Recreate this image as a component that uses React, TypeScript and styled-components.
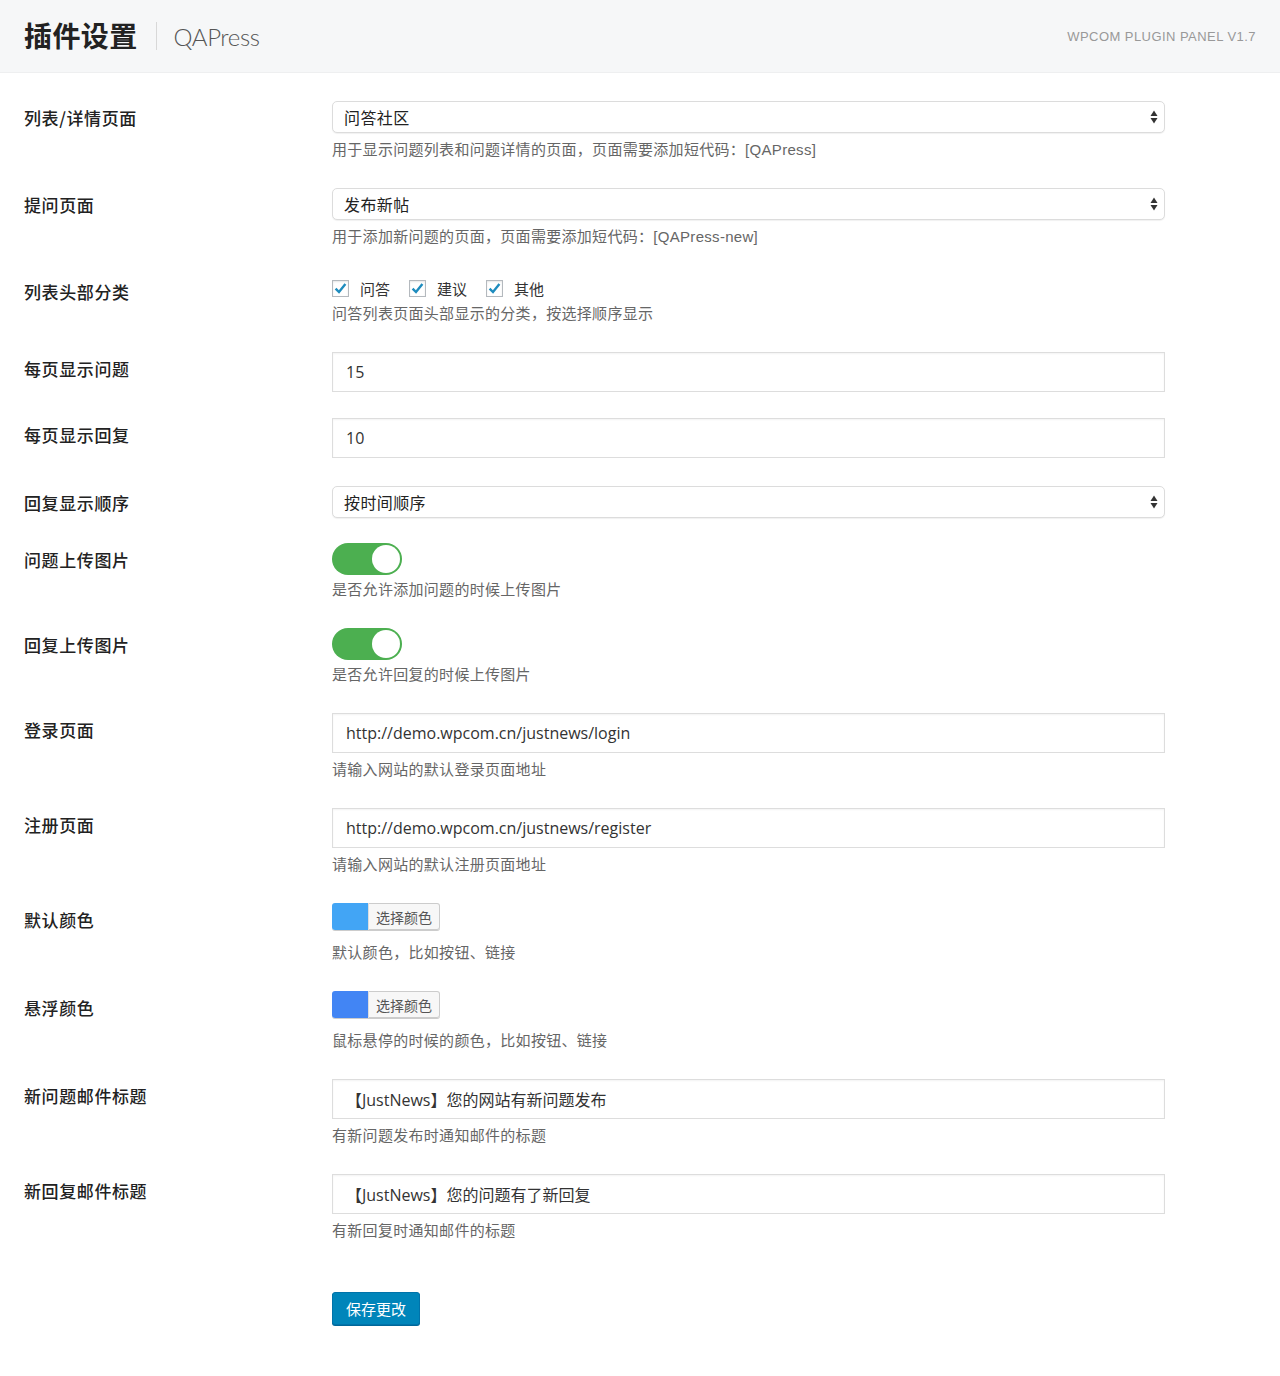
import React from "react";
import styled, { createGlobalStyle } from "styled-components";

const GlobalStyle = createGlobalStyle`
  html, body {
    margin: 0;
    padding: 0;
    background: #fff;
  }
  body {
    font-family: "Liberation Sans", "Noto Sans CJK SC", sans-serif;
    color: #333;
  }
`;

const Page = styled.div`
  width: 1280px;
  min-height: 1376px;
  background: #fff;
`;

const Header = styled.header`
  display: flex;
  align-items: center;
  justify-content: space-between;
  height: 73px;
  padding: 0 24px;
  box-sizing: border-box;
  background: #f6f7f8;
  border-bottom: 1px solid #eeeff0;
`;

const TitleGroup = styled.div`
  display: flex;
  align-items: center;
`;

const Title = styled.h1`
  margin: 0;
  font-size: 28px;
  font-weight: 700;
  color: #222;
  letter-spacing: 0.4px;
  font-family: "Noto Sans CJK SC", sans-serif;
  line-height: 1;
  padding-bottom: 2px;
`;

const Divider = styled.span`
  width: 1px;
  height: 28px;
  background: #d8d8d8;
  margin: 0 17px 0 18px;
`;

const SubTitle = styled.span`
  font-size: 24px;
  font-weight: 300;
  color: #555;
  font-family: "Lato", "Liberation Sans", sans-serif;
  letter-spacing: -0.4px;
`;

const Version = styled.span`
  font-size: 13px;
  color: #999;
  letter-spacing: 0.45px;
`;

const Form = styled.form`
  padding: 28px 0 40px 24px;
`;

const Row = styled.div<{ $pb?: number }>`
  display: grid;
  grid-template-columns: 308px 833px;
  align-items: start;
  padding-bottom: ${(p) => p.$pb ?? 28}px;
`;

const Label = styled.div`
  font-family: "Noto Sans CJK SC", sans-serif;
  font-size: 17px;
  font-weight: 500;
  color: #222;
  letter-spacing: 0.6px;
  line-height: 34px;
`;

const Field = styled.div`
  display: flex;
  flex-direction: column;
  align-items: flex-start;
`;

const Desc = styled.p<{ $gap?: number }>`
  margin: ${(p) => p.$gap ?? 6}px 0 0;
  font-size: 15px;
  line-height: 20px;
  color: #666;
  letter-spacing: 0.3px;
`;

const SelectBox = styled.div`
  position: relative;
  width: 833px;
  height: 32px;
  box-sizing: border-box;
  border: 1px solid #dcdcdc;
  border-radius: 5px;
  background: #fff;
  box-shadow: 0 1px 1px rgba(0, 0, 0, 0.06);
  display: flex;
  align-items: center;
  padding: 0 11px;
  font-size: 16px;
  color: #222;
  letter-spacing: 0.4px;
`;

const Arrows = styled.svg`
  position: absolute;
  right: 5px;
  top: 7px;
`;

const TextInput = styled.div`
  width: 833px;
  height: 40px;
  box-sizing: border-box;
  border: 1px solid #ddd;
  box-shadow: inset 0 1px 2px rgba(0, 0, 0, 0.05);
  background: #fff;
  display: flex;
  align-items: center;
  padding: 0 13px;
  font-family: "Open Sans", "Noto Sans CJK SC", sans-serif;
  font-size: 16px;
  color: #333;
`;

const CheckList = styled.div`
  display: flex;
  align-items: center;
  height: 24px;
  padding-top: 1px;
`;

const CheckItem = styled.label`
  display: flex;
  align-items: center;
  margin-right: 19px;
  font-size: 15px;
  color: #333;
`;

const CheckBox = styled.span`
  width: 17px;
  height: 17px;
  box-sizing: border-box;
  border: 1px solid #b4b9be;
  box-shadow: inset 0 1px 2px rgba(0, 0, 0, 0.1);
  background: #fff;
  display: flex;
  align-items: center;
  justify-content: center;
  margin-right: 11px;
`;

const Toggle = styled.span`
  position: relative;
  width: 70px;
  height: 32px;
  border-radius: 16px;
  background: #4caf50;
  display: block;
`;

const Knob = styled.span`
  position: absolute;
  right: 2px;
  top: 2px;
  width: 28px;
  height: 28px;
  border-radius: 50%;
  background: #fff;
`;

const ColorPicker = styled.div`
  display: flex;
  height: 27px;
  border-radius: 3px;
  box-shadow: 0 1px 0 #ccc;
  margin-bottom: 7px;
`;

const Swatch = styled.span<{ $color: string }>`
  width: 36px;
  height: 27px;
  background: ${(p) => p.$color};
  border-radius: 3px 0 0 3px;
`;

const PickButton = styled.span`
  box-sizing: border-box;
  height: 27px;
  padding: 0 7px;
  display: flex;
  align-items: center;
  font-size: 14px;
  color: #555;
  background: #f7f7f7;
  border: 1px solid #ccc;
  border-left: 1px solid #ddd;
  border-radius: 0 3px 3px 0;
`;

const SaveRow = styled.div`
  padding: 23px 0 0 308px;
`;

const SaveButton = styled.button`
  width: 88px;
  height: 33px;
  background: #0085ba;
  border: 1px solid #0073aa;
  border-radius: 3px;
  box-shadow: 0 1px 0 #006799;
  color: #fff;
  font-size: 15px;
  font-family: "Noto Sans CJK SC", sans-serif;
  padding: 0;
  cursor: pointer;
`;

const Select = ({ value }: { value: string }) => (
  <SelectBox>
    {value}
    <Arrows width="10" height="16" viewBox="0 0 10 16">
      <path d="M5 1.5 L8.5 7 L1.5 7 Z" fill="#333" />
      <path d="M1.5 9 L8.5 9 L5 14.5 Z" fill="#333" />
    </Arrows>
  </SelectBox>
);

const Check = ({ label }: { label: string }) => (
  <CheckItem>
    <CheckBox>
      <svg width="15" height="15" viewBox="0 0 15 15">
        <path d="M2.6 7.6 L6 11 L12.4 3" fill="none" stroke="#1e8cbe" strokeWidth="2.4" />
      </svg>
    </CheckBox>
    {label}
  </CheckItem>
);

const Switch = () => (
  <Toggle>
    <Knob />
  </Toggle>
);

const Color = ({ color }: { color: string }) => (
  <ColorPicker>
    <Swatch $color={color} />
    <PickButton>选择颜色</PickButton>
  </ColorPicker>
);

const App: React.FunctionComponent = () => {
  return (
    <Page>
      <GlobalStyle />
      <Header>
        <TitleGroup>
          <Title>插件设置</Title>
          <Divider />
          <SubTitle>QAPress</SubTitle>
        </TitleGroup>
        <Version>WPCOM PLUGIN PANEL V1.7</Version>
      </Header>
      <Form>
        <Row>
          <Label>列表/详情页面</Label>
          <Field>
            <Select value="问答社区" />
            <Desc $gap={7}>用于显示问题列表和问题详情的页面，页面需要添加短代码：[QAPress]</Desc>
          </Field>
        </Row>
        <Row>
          <Label>提问页面</Label>
          <Field>
            <Select value="发布新帖" />
            <Desc $gap={7}>用于添加新问题的页面，页面需要添加短代码：[QAPress-new]</Desc>
          </Field>
        </Row>
        <Row $pb={28}>
          <Label>列表头部分类</Label>
          <Field>
            <CheckList>
              <Check label="问答" />
              <Check label="建议" />
              <Check label="其他" />
            </CheckList>
            <Desc $gap={4}>问答列表页面头部显示的分类，按选择顺序显示</Desc>
          </Field>
        </Row>
        <Row $pb={26}>
          <Label>每页显示问题</Label>
          <Field>
            <TextInput>15</TextInput>
          </Field>
        </Row>
        <Row>
          <Label>每页显示回复</Label>
          <Field>
            <TextInput>10</TextInput>
          </Field>
        </Row>
        <Row $pb={23}>
          <Label>回复显示顺序</Label>
          <Field>
            <Select value="按时间顺序" />
          </Field>
        </Row>
        <Row>
          <Label>问题上传图片</Label>
          <Field>
            <Switch />
            <Desc $gap={5}>是否允许添加问题的时候上传图片</Desc>
          </Field>
        </Row>
        <Row>
          <Label>回复上传图片</Label>
          <Field>
            <Switch />
            <Desc $gap={5}>是否允许回复的时候上传图片</Desc>
          </Field>
        </Row>
        <Row>
          <Label>登录页面</Label>
          <Field>
            <TextInput>http://demo.wpcom.cn/justnews/login</TextInput>
            <Desc $gap={7}>请输入网站的默认登录页面地址</Desc>
          </Field>
        </Row>
        <Row>
          <Label>注册页面</Label>
          <Field>
            <TextInput>http://demo.wpcom.cn/justnews/register</TextInput>
            <Desc $gap={7}>请输入网站的默认注册页面地址</Desc>
          </Field>
        </Row>
        <Row>
          <Label>默认颜色</Label>
          <Field>
            <Color color="#42a5f5" />
            <Desc>默认颜色，比如按钮、链接</Desc>
          </Field>
        </Row>
        <Row>
          <Label>悬浮颜色</Label>
          <Field>
            <Color color="#4285f4" />
            <Desc>鼠标悬停的时候的颜色，比如按钮、链接</Desc>
          </Field>
        </Row>
        <Row>
          <Label>新问题邮件标题</Label>
          <Field>
            <TextInput>【JustNews】您的网站有新问题发布</TextInput>
            <Desc $gap={7}>有新问题发布时通知邮件的标题</Desc>
          </Field>
        </Row>
        <Row>
          <Label>新回复邮件标题</Label>
          <Field>
            <TextInput>【JustNews】您的问题有了新回复</TextInput>
            <Desc $gap={7}>有新回复时通知邮件的标题</Desc>
          </Field>
        </Row>
        <SaveRow>
          <SaveButton type="button">保存更改</SaveButton>
        </SaveRow>
      </Form>
    </Page>
  );
};

export default App;
